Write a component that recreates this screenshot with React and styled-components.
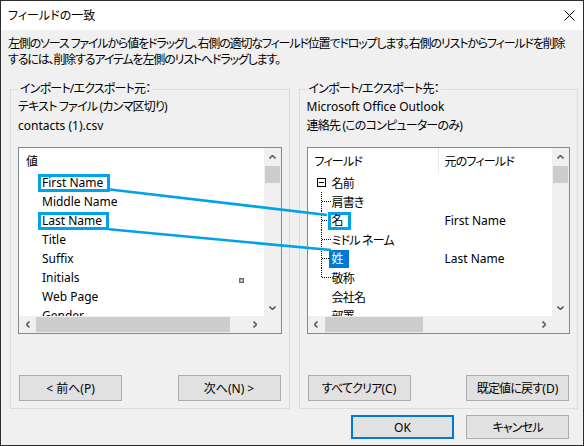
import React from "react";
import styled, { createGlobalStyle } from "styled-components";

const MARK = "#00a2e8";

const GlobalStyle = createGlobalStyle`
  html, body { margin: 0; padding: 0; background: #ffffff; }
  body {
    font-family: "Noto Sans", "Noto Sans CJK JP", sans-serif;
    font-size: 12px;
    font-feature-settings: "palt";
    color: #000;
  }
  *, *::before, *::after { box-sizing: border-box; }
`;

/* Japanese text run: Noto's kana are a little wider than the UI font's */
const Jp = styled.span`
  letter-spacing: -0.8px;
`;

const Window = styled.div`
  position: relative;
  width: 584px;
  height: 446px;
  border: 1px solid #2b2b2b;
  background: #f0f0f0;
  display: flex;
  flex-direction: column;
  overflow: hidden;
`;

const TitleBar = styled.div`
  flex: none;
  height: 29px;
  background: #ffffff;
  display: flex;
  align-items: center;
  justify-content: space-between;
  padding: 0 8px 0 7px;
`;

const Title = styled.span`
  line-height: 16px;
  white-space: nowrap;
`;

const CloseIcon = styled.svg`
  display: block;
  width: 11px;
  height: 11px;
`;

const Description = styled.div`
  flex: none;
  padding: 6px 8px 0 7px;
  line-height: 16px;
  letter-spacing: -1.15px;
  white-space: nowrap;
`;

const GroupsRow = styled.div`
  flex: 1;
  min-height: 0;
  margin-top: 13px;
  padding: 0 5px 0 9px;
  display: flex;
  gap: 9px;
`;

const Group = styled.fieldset`
  flex: 1;
  min-width: 0;
  margin: 0;
  padding: 0 7px 7px 7px;
  border: 1px solid #dcdcdc;
  display: flex;
  flex-direction: column;
`;

const Legend = styled.legend`
  padding: 0 2px;
  line-height: 16px;
  white-space: nowrap;
`;

const InfoLine = styled.div`
  line-height: 19px;
  white-space: nowrap;
`;

const ListBox = styled.div`
  flex: none;
  margin-top: 12px;
  height: 187px;
  border: 1px solid #828790;
  background: #ffffff;
  display: grid;
  grid-template-columns: minmax(0, 1fr) 17px;
  grid-template-rows: minmax(0, 1fr) 17px;
  overflow: hidden;
`;

const Pane = styled.div`
  overflow: hidden;
  min-width: 0;
`;

const VScroll = styled.div`
  background: #f0f0f0;
  display: flex;
  flex-direction: column;
`;

const HScroll = styled.div`
  background: #f0f0f0;
  display: flex;
`;

const Corner = styled.div`
  background: #f0f0f0;
`;

const ArrowBox = styled.div`
  flex: none;
  width: 17px;
  height: 17px;
  display: flex;
  align-items: center;
  justify-content: center;
`;

const Spacer = styled.div`
  flex: 1;
`;

const VThumb = styled.div`
  flex: none;
  height: 17px;
  margin: 1px 1px 0 1px;
  background: #cdcdcd;
`;

const HThumb = styled.div`
  flex: none;
  width: ${(p) => p.$w}px;
  margin: 1px 0;
  background: #cdcdcd;
`;

const ValueHeader = styled.div`
  height: 25px;
  padding-left: 7px;
  display: flex;
  align-items: center;
`;

const ValueItem = styled.div`
  height: 19px;
  padding-left: 23px;
  display: flex;
  align-items: center;
  white-space: nowrap;
`;

const Marked = styled.span`
  display: inline-block;
  height: 18px;
  line-height: 12px;
  border: 3px solid ${MARK};
  padding: 0 4px 0 1px;
  margin: 0 -7px 0 -4px;
  white-space: nowrap;
`;

const Selected = styled.span`
  display: inline-block;
  height: 18px;
  line-height: 18px;
  padding: 0 5px 0 3px;
  margin-left: -3px;
  background: #0078d7;
  color: #ffffff;
`;

const HeaderRow = styled.div`
  height: 25px;
  display: flex;
`;

const HeaderCell = styled.div`
  flex: none;
  width: ${(p) => (p.$first ? "131px" : "auto")};
  padding-left: ${(p) => (p.$first ? "7px" : "6px")};
  border-right: ${(p) => (p.$first ? "1px solid #e5e5e5" : "none")};
  display: flex;
  align-items: center;
  white-space: nowrap;
`;

const TreeRow = styled.div`
  height: 19px;
  display: flex;
  align-items: center;
  white-space: nowrap;
`;

const TreeCell = styled.div`
  flex: none;
  width: 130px;
  height: 19px;
  padding-left: ${(p) => p.$indent}px;
  display: flex;
  align-items: center;
`;

const MapCell = styled.div`
  padding-left: 7px;
`;

const ButtonRow = styled.div`
  margin-top: auto;
  padding: 0 1px;
  display: flex;
  justify-content: space-between;
`;

const Button = styled.button`
  width: 103px;
  height: ${(p) => (p.$small ? "24px" : "26px")};
  padding: 0;
  margin: 0;
  font: inherit;
  color: #000;
  background: #e1e1e1;
  border: ${(p) => (p.$default ? "2px solid #0078d7" : "1px solid #adadad")};
  white-space: nowrap;
`;

const Footer = styled.div`
  flex: none;
  display: flex;
  justify-content: flex-end;
  gap: 12px;
  padding: 6px 14px 6px 0;
`;

const Annotation = styled.svg`
  position: absolute;
  top: -1px;
  left: -1px;
  width: 584px;
  height: 446px;
  pointer-events: none;
`;

const chevrons = {
  up: { w: 7, h: 4, d: "M0.5 3.5 L3.5 0.5 L6.5 3.5" },
  down: { w: 7, h: 4, d: "M0.5 0.5 L3.5 3.5 L6.5 0.5" },
  left: { w: 4, h: 7, d: "M3.5 0.5 L0.5 3.5 L3.5 6.5" },
  right: { w: 4, h: 7, d: "M0.5 0.5 L3.5 3.5 L0.5 6.5" },
};

function Chevron({ dir }) {
  const c = chevrons[dir];
  return (
    <svg width={c.w} height={c.h} viewBox={`0 0 ${c.w} ${c.h}`}>
      <path d={c.d} fill="none" stroke="#606060" strokeWidth="1.6" />
    </svg>
  );
}

function Expander() {
  return (
    <svg width="9" height="9" viewBox="0 0 9 9" style={{ marginRight: 6, flex: "none" }}>
      <rect x="0.5" y="0.5" width="8" height="8" fill="#fff" stroke="#000" shapeRendering="crispEdges" />
      <path d="M2 4.5 H7" stroke="#000" shapeRendering="crispEdges" />
    </svg>
  );
}

function Branch({ last }) {
  return (
    <svg width="11" height="19" viewBox="0 0 11 19" style={{ flex: "none" }}>
      <path
        d={`M0.5 0 V${last ? 10 : 19}`}
        stroke="#000"
        strokeDasharray="1 1"
        shapeRendering="crispEdges"
      />
      <path d="M1 9.5 H10" stroke="#000" strokeDasharray="1 1" shapeRendering="crispEdges" />
    </svg>
  );
}

function Scrollbars({ thumb }) {
  return (
    <>
      <VScroll>
        <ArrowBox>
          <Chevron dir="up" />
        </ArrowBox>
        <VThumb />
        <Spacer />
        <ArrowBox>
          <Chevron dir="down" />
        </ArrowBox>
      </VScroll>
      <HScroll>
        <ArrowBox>
          <Chevron dir="left" />
        </ArrowBox>
        <HThumb $w={thumb} />
        <Spacer />
        <ArrowBox>
          <Chevron dir="right" />
        </ArrowBox>
      </HScroll>
      <Corner />
    </>
  );
}

const sourceValues = [
  { label: "First Name", marked: true },
  { label: "Middle Name" },
  { label: "Last Name", marked: true },
  { label: "Title" },
  { label: "Suffix" },
  { label: "Initials" },
  { label: "Web Page" },
  { label: "Gender" },
];

const treeRows = [
  { label: "名前", kind: "parent" },
  { label: "肩書き", kind: "child" },
  { label: "名", kind: "child", marked: true, map: "First Name" },
  { label: "ミドル ネーム", kind: "child" },
  { label: "姓", kind: "child", selected: true, map: "Last Name" },
  { label: "敬称", kind: "child", last: true },
  { label: "会社名", kind: "plain" },
  { label: "部署", kind: "plain" },
];

function TreeLabel({ row }) {
  if (row.marked) return <Marked>{row.label}</Marked>;
  if (row.selected) return <Selected>{row.label}</Selected>;
  return <Jp>{row.label}</Jp>;
}

export default function App() {
  return (
    <>
      <GlobalStyle />
      <Window>
        <TitleBar>
          <Title>フィールドの一致</Title>
          <CloseIcon viewBox="0 0 11 11">
            <path d="M0.5 0.5 L10.5 10.5 M10.5 0.5 L0.5 10.5" stroke="#000" strokeWidth="1" />
          </CloseIcon>
        </TitleBar>

        <Description>
          左側のソース ファイルから値をドラッグし、右側の適切なフィールド位置でドロップします。右側のリストからフィールドを削除
          <br />
          するには、削除するアイテムを左側のリストへドラッグします。
        </Description>

        <GroupsRow>
          <Group>
            <Legend>
              <Jp>インポート/エクスポート元：</Jp>
            </Legend>
            <InfoLine>
              <Jp>テキスト ファイル (カンマ区切り)</Jp>
            </InfoLine>
            <InfoLine>contacts (1).csv</InfoLine>
            <ListBox>
              <Pane>
                <ValueHeader>値</ValueHeader>
                {sourceValues.map((v) => (
                  <ValueItem key={v.label}>
                    {v.marked ? <Marked>{v.label}</Marked> : v.label}
                  </ValueItem>
                ))}
              </Pane>
              <Scrollbars thumb={194} />
            </ListBox>
            <ButtonRow>
              <Button>&lt; 前へ(P)</Button>
              <Button>次へ(N) &gt;</Button>
            </ButtonRow>
          </Group>

          <Group>
            <Legend>
              <Jp>インポート/エクスポート先：</Jp>
            </Legend>
            <InfoLine>Microsoft Office Outlook</InfoLine>
            <InfoLine>
              <Jp>連絡先 (このコンピューターのみ)</Jp>
            </InfoLine>
            <ListBox>
              <Pane>
                <HeaderRow>
                  <HeaderCell $first>
                    <Jp>フィールド</Jp>
                  </HeaderCell>
                  <HeaderCell>
                    <Jp>元のフィールド</Jp>
                  </HeaderCell>
                </HeaderRow>
                {treeRows.map((r) => (
                  <TreeRow key={r.label}>
                    <TreeCell $indent={r.kind === "parent" ? 9 : r.kind === "child" ? 13 : 24}>
                      {r.kind === "parent" && <Expander />}
                      {r.kind === "child" && <Branch last={r.last} />}
                      <TreeLabel row={r} />
                    </TreeCell>
                    {r.map && <MapCell>{r.map}</MapCell>}
                  </TreeRow>
                ))}
              </Pane>
              <Scrollbars thumb={98} />
            </ListBox>
            <ButtonRow>
              <Button>
                <Jp>すべてクリア</Jp>(C)
              </Button>
              <Button>
                <Jp>既定値に戻す</Jp>(D)
              </Button>
            </ButtonRow>
          </Group>
        </GroupsRow>

        <Footer>
          <Button $small $default>OK</Button>
          <Button $small>
            <Jp>キャンセル</Jp>
          </Button>
        </Footer>

        <Annotation viewBox="0 0 584 446">
          <line x1="110" y1="189.5" x2="327" y2="215" stroke={MARK} strokeWidth="2.6" />
          <line x1="109" y1="229.3" x2="331" y2="250" stroke={MARK} strokeWidth="2.6" />
          <rect x="239.75" y="278.75" width="3.5" height="3.5" fill="#fff" stroke="#6d6d6d" strokeWidth="1.5" />
        </Annotation>
      </Window>
    </>
  );
}
